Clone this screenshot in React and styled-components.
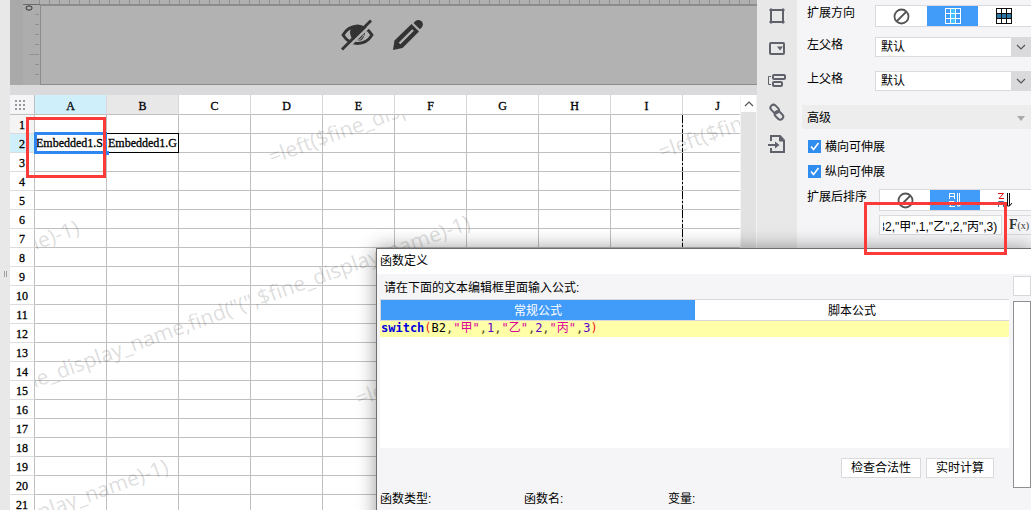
import React, { useEffect, useRef } from "react";
import styled, { createGlobalStyle, css } from "styled-components";

const Global = createGlobalStyle`
  *, *::before, *::after { box-sizing: border-box; }
  body {
    margin: 0;
    overflow: hidden;
    background: #e8e8e8;
    color: #000;
    font: 12px/16px "Liberation Sans", "Noto Sans CJK SC", sans-serif;
  }
  button, input, select { font: inherit; color: inherit; margin: 0; }
`;

const Shell = styled.div`
  position: relative;
  display: grid;
  grid-template-columns: 10px minmax(0, 1fr) 40px 234px;
  height: 100vh;
  overflow: hidden;
`;

/* ---------- designer area ---------- */

const Splitter = styled.div`
  display: flex;
  align-items: center;
  justify-content: center;
  padding-top: 38px;
  background: #e8e8e8;
  &::before {
    content: "";
    width: 3px;
    height: 6px;
    border: solid #a0a0a0;
    border-width: 0 1px;
  }
`;

const Designer = styled.main`
  display: flex;
  flex-direction: column;
  min-width: 0;
  min-height: 0;
`;

const Stage = styled.section`
  display: grid;
  grid-template-columns: 13px 17px minmax(0, 1fr);
  grid-template-rows: 4px 81px;
  background: #a9a9a9;
`;

const TopRuler = styled.div`
  grid-column: 3;
  background: repeating-linear-gradient(90deg, #919191 0 1px, #b0b0b0 1px 10px);
  margin-left: -1px;
`;

const RulerCorner = styled.div`
  grid-column: 2;
  background: #adadad;
`;

const SideRuler = styled.div`
  grid-column: 2;
  background: #adadad;
  border-top: 1px solid #6c6c6c;
`;

const Canvas = styled.div`
  display: flex;
  justify-content: center;
  gap: 18px;
  padding: 13px 34px 0 1px;
  background: #b2b2b2;
  border: solid #8c8c8c;
  border-width: 2px 0 1px 1px;
`;

const IconButton = styled.button`
  display: flex;
  padding: 0;
  height: 32px;
  border: 0;
  background: none;
  color: #333;
`;

const Gap = styled.div`
  flex: none;
  height: 10px;
  background: #dadadd;
`;

const SheetArea = styled.section`
  flex: 1;
  display: flex;
  min-height: 0;
  background: #fff;
`;

const SheetView = styled.div`
  position: relative;
  flex: 1;
  min-width: 0;
  overflow: hidden;
`;

const Sheet = styled.table`
  width: 100%;
  table-layout: fixed;
  border-collapse: separate;
  border-spacing: 0;
  font: 12px/16px "Liberation Serif", serif;
  -webkit-text-stroke: 0.3px #000;
`;

const ColHead = styled.th`
  height: 20px;
  padding: 2px 0 0;
  font-weight: 400;
  text-align: center;
  border: solid #c0c0c0;
  border-width: 0 1px 1px 0;
  border-right-color: #d8d8dc;
  background: ${(p) => (p.$state === "active" ? "#cfeffb" : p.$state === "used" ? "#e8e8e8" : "#fff")};
  &:last-child { border-right: 0; padding-left: 12px; }
`;

const Corner = styled.td`
  padding: 0 0 0 4px;
  background: #f5f5f7;
  border: solid #c0c0c0;
  border-width: 0 1px 1px 0;
  svg { display: block; }
`;

const RowHead = styled.th`
  height: 19px;
  padding: 1px 0 0;
  line-height: 16px;
  font-weight: 400;
  text-align: center;
  border: solid #c0c0c0;
  border-width: 0 1px 1px 0;
  border-bottom-color: #dcdce0;
  background: ${(p) => (p.$state === "active" ? "#cfeffb" : p.$state === "used" ? "#f4f4f4" : "#fff")};
`;

const Cell = styled.td`
  position: relative;
  height: 19px;
  padding: 0 0 0 1px;
  line-height: 16px;
  white-space: nowrap;
  border: solid #c0c0c0;
  border-width: 0 1px 1px 0;
  &:last-child { border-right: 0; }
  ${(p) => p.$pageBreak && css`
    border-right: 0;
    background: repeating-linear-gradient(180deg, #000 0 8px, #c0c0c0 8px 10px, #000 10px 12px, #c0c0c0 12px 14px, #000 14px 19px) right / 1px 100% no-repeat;
  `}
`;

const Outline = styled.span`
  position: absolute;
  inset: ${(p) => (p.$selected ? "-2px -1px" : "-1px")};
  border: ${(p) => (p.$selected ? "3px solid #2f86f0" : "1px solid #000")};
  z-index: ${(p) => (p.$selected ? 3 : 2)};
  &::after {
    content: "";
    display: ${(p) => (p.$selected ? "block" : "none")};
    position: absolute;
    right: -5px;
    bottom: -4px;
    width: 4px;
    height: 4px;
    background: #2f86f0;
  }
`;

const WatermarkLayer = styled.div`
  position: absolute;
  inset: 20px 0 0 25px;
  overflow: hidden;
  pointer-events: none;
`;

const Watermark = styled.span`
  position: absolute;
  left: ${(p) => p.$x}px;
  top: ${(p) => p.$y}px;
  font: 21px/24px "Noto Sans", sans-serif;
  white-space: nowrap;
  color: rgba(0, 0, 0, 0.14);
  transform: rotate(-20deg);
  transform-origin: 0 100%;
`;

const Scrollbar = styled.div`
  flex: none;
  width: 17px;
  display: flex;
  flex-direction: column;
  background: #e2e2e2;
  border: solid #f4f4f4;
  border-width: 0 1px;
`;

const ScrollUp = styled.button`
  display: flex;
  align-items: center;
  justify-content: center;
  height: 17px;
  padding: 0;
  border: 0;
  background: #fff;
`;

/* ---------- tool rail ---------- */

const Rail = styled.nav`
  display: flex;
  flex-direction: column;
  align-items: center;
  gap: 12px;
  padding-top: 6px;
  background: #e8e8e8;
`;

const RailButton = styled.button`
  display: flex;
  padding: 0;
  width: 20px;
  height: 20px;
  border: 0;
  background: none;
  color: #5f616b;
`;

/* ---------- property panel ---------- */

const Panel = styled.aside`
  min-width: 0;
  overflow: hidden;
  background: #f5f5f7;
  padding: 5px 0 0 5px;
`;

const Field = styled.div`
  display: grid;
  grid-template-columns: ${(p) => (p.$wide ? 77 : 73)}px minmax(0, 1fr);
  align-items: start;
  margin-bottom: ${(p) => p.$after}px;
`;

const FieldLabel = styled.label`
  padding-left: 5px;
  line-height: 16px;
`;

const Segments = styled.div`
  display: flex;
  height: 22px;
  background: #fff;
  border: 1px solid #dadadd;
  border-right: 0;
`;

const Segment = styled.button`
  flex: 0 0 ${(p) => p.$w}px;
  display: flex;
  align-items: center;
  justify-content: center;
  padding: 0;
  border: 0;
  background: ${(p) => (p.$on ? "#419bf9" : "#fff")};
`;

const SelectBox = styled.div`
  display: flex;
  height: 20px;
  background: #fff;
  border: 1px solid #dadadd;
  border-right: 0;
`;

const Select = styled.select`
  flex: 1;
  min-width: 0;
  appearance: none;
  padding: 0 5px;
  border: 0;
  background: #fff;
`;

const SelectArrow = styled.span`
  flex: none;
  width: 20px;
  display: flex;
  align-items: center;
  justify-content: center;
  background: #dadadd;
  pointer-events: none;
`;

const GroupHeader = styled.button`
  display: flex;
  width: 100%;
  height: 24px;
  align-items: center;
  justify-content: space-between;
  padding: 2px 6px 0 5px;
  border: 0;
  background: #ededed;
  text-align: left;
`;

const CheckGroup = styled.div`
  padding: 5px 0;
`;

const CheckRow = styled.label`
  display: flex;
  align-items: center;
  gap: 4px;
  height: 25px;
  padding-left: 6px;
`;

const Checkbox = styled.input`
  appearance: none;
  width: 13px;
  height: 13px;
  background: #2f8df0 url("data:image/svg+xml,%3Csvg xmlns='http://www.w3.org/2000/svg' viewBox='0 0 13 13'%3E%3Cpath d='M3 6.5l2.5 3L10.500 3' fill='none' stroke='white' stroke-width='1.600'/%3E%3C/svg%3E") center / 13px 13px;
`;

const FormulaRow = styled.div`
  display: flex;
  gap: 4px;
  padding-left: 77px;
  height: 20px;
`;

const FormulaInput = styled.input`
  width: 123px;
  height: 20px;
  padding: 0 4px 0 3px;
  border: 1px solid #dadadd;
  background: #fff;
`;

const FxButton = styled.button`
  flex: 1;
  padding: 0;
  border: 1px solid #dadadd;
  border-right: 0;
  background: #f5f5f7;
  font: 700 14px/16px "Liberation Serif", serif;
  color: #333;
  white-space: nowrap;
  small { font-size: 10px; font-weight: 400; }
`;

/* ---------- formula dialog ---------- */

const Dialog = styled.section`
  position: absolute;
  z-index: 5;
  left: 376px;
  right: -1px;
  top: 248px;
  bottom: -30px;
  display: flex;
  flex-direction: column;
  border: 1px solid #6e6e6e;
  background: #f5f5f7;
  box-shadow: 0 0 18px rgba(0, 0, 0, 0.4);
`;

const TitleBar = styled.h2`
  margin: 0;
  height: 25px;
  padding: 4px 3px;
  font-size: 12px;
  font-weight: 400;
  line-height: 16px;
  background: #fff;
`;

const DialogBody = styled.div`
  display: grid;
  grid-template-columns: minmax(0, 1fr) 18px;
  column-gap: 4px;
  padding-left: 3px;
`;

const EditorColumn = styled.div`
  display: flex;
  flex-direction: column;
`;

const Prompt = styled.p`
  margin: 0;
  height: 25px;
  padding: 6px 4px;
`;

const Tabs = styled.div`
  display: flex;
  height: 22px;
  border: 1px solid #d8d8dc;
  border-right: 0;
`;

const Tab = styled.button`
  flex: 1;
  padding: 2px 0 0;
  border: 0;
  line-height: 16px;
  background: ${(p) => (p.$on ? "#419bf9" : "#fff")};
  color: ${(p) => (p.$on ? "#fff" : "#000")};
`;

const Editor = styled.div`
  height: 127px;
  background: #fff;
  font: 12px/16px "DejaVu Sans Mono", "Noto Sans CJK SC", monospace;
  outline: none;
`;

const CodeLine = styled.div`
  height: 16px;
  line-height: 14px;
  padding-left: 1px;
  background: #ffffa8;
  white-space: pre;
`;

const tokenColors = { fn: "#0000e0", paren: "#f02020", ref: "#000", sep: "#4d4d20", str: "#dc009c", num: "#6400c8" };
const Token = styled.span`
  color: ${(p) => tokenColors[p.$kind]};
  font-weight: ${(p) => (p.$kind === "fn" ? 700 : 400)};
`;

const Actions = styled.div`
  display: flex;
  justify-content: flex-end;
  gap: 5px;
  padding: 10px 15px 0 0;
`;

const ActionButton = styled.button`
  height: 20px;
  padding: 0 9px;
  border: 1px solid #dadadd;
  background: #fff;
  line-height: 18px;
`;

const Captions = styled.div`
  display: grid;
  grid-template-columns: 144px 144px 1fr;
  padding: 3px 0 0 3px;
`;

const SideColumn = styled.div`
  display: flex;
  flex-direction: column;
  gap: 5px;
  padding-top: 2px;
`;

const SearchBox = styled.input`
  width: 100%;
  height: 20px;
  border: 1px solid #d8d8dc;
  background: #fff;
`;

const ListBox = styled.div`
  height: 187px;
  border: 1px solid #909090;
  background: #fff;
`;

const Highlight = styled.div`
  position: absolute;
  z-index: 6;
  left: ${(p) => p.$x}px;
  top: ${(p) => p.$y}px;
  width: ${(p) => p.$w}px;
  height: ${(p) => p.$h}px;
  border: 3px solid #fb3a3a;
  pointer-events: none;
`;

/* ---------- icons ---------- */

const EyeOff = () => (
  <svg width="33" height="32" viewBox="0 0 33 32" fill="none" stroke="currentColor">
    <path d="M2 16C6 9 11 7.500 16 7.500S27 9 31 16C27 22.500 21 24.500 16.500 24.500S6 22.500 2 16z" strokeWidth="2.800" />
    <path d="M9 13a7.500 7.500 0 0 1 15 0q0 5-4 8.500h-7Q9 18 9 13z" fill="currentColor" stroke="none" />
    <path d="M12 21.500q8 1 11-6" stroke="#b2b2b2" strokeWidth="1" />
    <path d="M3 32L33 3" stroke="#b2b2b2" strokeWidth="2.500" />
    <path d="M1 30.500L30 1.500" strokeWidth="2.800" />
  </svg>
);

const Pencil = () => (
  <svg width="32" height="32" viewBox="0 0 32 32" fill="currentColor">
    <path d="M1 31L2.500 21.500 19.500 5l7.500 7.500L10.500 29z" />
    <path d="M21.500 4l2-2c2-1.800 4.500-1.200 6 .3s2 4 .3 6l-2 2z" />
    <path d="M7.500 24.500L21 11" stroke="#b2b2b2" strokeWidth="2.400" />
  </svg>
);

const DotsIcon = () => (
  <svg width="12" height="10" fill="#999">
    {[0, 4, 8].map((y) => [1, 5, 9].map((x) => <rect key={`${x}-${y}`} x={x} y={y} width="2" height="2" />))}
  </svg>
);

const Chevron = ({ up }) => (
  <svg width="10" height="6" viewBox="0 0 10 6" fill="none" stroke="#555" strokeWidth="1.200">
    <path d={up ? "M1 5l4-4 4 4" : "M1 1l4 4 4-4"} />
  </svg>
);

const Ban = () => (
  <svg width="17" height="17" viewBox="0 0 17 17" fill="none" stroke="#555" strokeWidth="1.800">
    <circle cx="8.500" cy="8.500" r="7" />
    <path d="M3.500 13.500l10-10" />
  </svg>
);

const GridIcon = ({ horizontal }) => (
  <svg width="16" height="16" viewBox="0 0 16 16">
    <rect width="16" height="16" fill={horizontal ? "#111" : "#fff"} />
    {[1, 6, 11].map((y) =>
      [1, 6, 11].map((x) => (
        <rect
          key={`${x}-${y}`}
          x={x}
          y={y}
          width="4"
          height="4"
          fill={horizontal ? (y === 6 ? "#2f76a8" : "#fff") : x === 6 ? "#3fc4ff" : "#419bf9"}
        />
      ))
    )}
  </svg>
);

const SortIcon = ({ desc }) => (
  <svg width="16" height="16" viewBox="0 0 16 16" fill="none" stroke={desc ? "#111" : "#fff"}>
    {desc ? (
      <>
        <path d="M1 1.500h5.500L2 6.500H7" stroke="#e01010" />
        <path d="M1.500 15V9.500h5V15M1.500 12.500h5" stroke="#2f76a8" />
      </>
    ) : (
      <>
        <path d="M2.500 7V1.500h5V7M2.500 4.500h5" />
        <path d="M2 9.500h5L2.500 14.500H8" />
      </>
    )}
    <path d="M10.500 1v13M12.500 1v13M10.500 14h2l2.500-3" />
  </svg>
);

const railIcons = [
  ["单元格元素", <path d="M4 2.500v15M16 2.500v15M2.500 4h15M2.500 16h15" />],
  ["控件设置", <><rect x="3" y="5" width="14" height="11" rx="1" /><path d="M10 8.500h6l-3 4z" fill="currentColor" stroke="none" /></>],
  ["条件属性", <><rect x="6" y="5" width="12" height="4" rx="1" /><rect x="6" y="12" width="9" height="4" rx="1" /><path d="M4 6.500H1.500v8H4" strokeWidth="1" /></>],
  ["超级链接", <g transform="rotate(45 10 10)"><rect x="1.500" y="6.500" width="9.500" height="6" rx="3" /><rect x="9" y="8" width="9.500" height="6" rx="3" /></g>],
  ["导出", <><path d="M4 7V2h9l4 4.500V18H4v-4" /><path d="M12.500 2v5H17z" fill="currentColor" strokeWidth="1" /><path d="M1 11h9" /><path d="M8 7.500l4.500 3.500L8 14.500z" fill="currentColor" stroke="none" /></>],
];

/* ---------- data ---------- */

const columns = "ABCDEFGHIJ".split("");
const rows = Array.from({ length: 21 }, (_, i) => i + 1);
const cellText = { A2: "Embedded1.S", B2: "Embedded1.G" };
const watermarkText = '=left($fine_display_name,find("(",$fine_display_name)-1)';
const watermarks = [[238, 29], [628, 24], [-77, 281], [-468, 286], [325, 271], [-379, 525]];
const code = [
  ["fn", "switch"], ["paren", "("], ["ref", "B2"], ["sep", ","], ["str", '"甲"'], ["sep", ","], ["num", "1"],
  ["sep", ","], ["str", '"乙"'], ["sep", ","], ["num", "2"], ["sep", ","], ["str", '"丙"'], ["sep", ","],
  ["num", "3"], ["paren", ")"],
];

function Spreadsheet() {
  return (
    <SheetArea>
      <SheetView>
        <Sheet>
          <colgroup>
            <col width="25" />
            {columns.map((c) => <col key={c} width={c === "J" ? undefined : 72} />)}
          </colgroup>
          <thead>
            <tr>
              <Corner><DotsIcon /></Corner>
              {columns.map((c) => (
                <ColHead key={c} scope="col" $state={c === "A" ? "active" : c === "B" ? "used" : ""}>{c}</ColHead>
              ))}
            </tr>
          </thead>
          <tbody>
            {rows.map((r) => (
              <tr key={r}>
                <RowHead scope="row" $state={r === 2 ? "active" : r === 1 ? "used" : ""}>{r}</RowHead>
                {columns.map((c) => (
                  <Cell key={c} $pageBreak={c === "I"}>
                    {cellText[c + r]}
                    {cellText[c + r] && <Outline $selected={c === "A"} />}
                  </Cell>
                ))}
              </tr>
            ))}
          </tbody>
        </Sheet>
        <WatermarkLayer aria-hidden="true">
          {watermarks.map(([x, y]) => <Watermark key={`${x}-${y}`} $x={x} $y={y}>{watermarkText}</Watermark>)}
        </WatermarkLayer>
      </SheetView>
      <Scrollbar><ScrollUp aria-label="向上滚动"><Chevron up /></ScrollUp></Scrollbar>
    </SheetArea>
  );
}

function ParentField({ id, label, after }) {
  return (
    <Field $after={after}>
      <FieldLabel htmlFor={id}>{label}</FieldLabel>
      <SelectBox>
        <Select id={id} defaultValue="默认"><option>默认</option></Select>
        <SelectArrow><Chevron /></SelectArrow>
      </SelectBox>
    </Field>
  );
}

function Properties() {
  const formula = useRef(null);
  useEffect(() => {
    formula.current.scrollLeft = formula.current.scrollWidth;
  }, []);
  return (
    <Panel>
      <Field $after={10}>
        <FieldLabel as="span">扩展方向</FieldLabel>
        <Segments role="group" aria-label="扩展方向">
          <Segment $w={51} aria-label="不扩展"><Ban /></Segment>
          <Segment $w={51} $on aria-label="纵向"><GridIcon /></Segment>
          <Segment $w={51} aria-label="横向"><GridIcon horizontal /></Segment>
        </Segments>
      </Field>
      <ParentField id="left-parent" label="左父格" after={14} />
      <ParentField id="top-parent" label="上父格" after={14} />
      <GroupHeader>
        高级
        <svg width="8" height="5"><path d="M0 0h8L4 5z" fill="#aaa" /></svg>
      </GroupHeader>
      <CheckGroup>
        <CheckRow><Checkbox type="checkbox" defaultChecked />横向可伸展</CheckRow>
        <CheckRow><Checkbox type="checkbox" defaultChecked />纵向可伸展</CheckRow>
      </CheckGroup>
      <Field $wide $after={4}>
        <FieldLabel as="span">扩展后排序</FieldLabel>
        <Segments role="group" aria-label="扩展后排序">
          <Segment $w={50} aria-label="不排序"><Ban /></Segment>
          <Segment $w={50} $on aria-label="升序"><SortIcon /></Segment>
          <Segment $w={50} aria-label="降序"><SortIcon desc /></Segment>
        </Segments>
      </Field>
      <FormulaRow>
        <FormulaInput ref={formula} aria-label="排序公式" defaultValue={'B2,"甲",1,"乙",2,"丙",3)'} />
        <FxButton>F<small>(x)</small></FxButton>
      </FormulaRow>
    </Panel>
  );
}

function FormulaDialog() {
  return (
    <Dialog role="dialog" aria-labelledby="dialog-title">
      <TitleBar id="dialog-title">函数定义</TitleBar>
      <DialogBody>
        <EditorColumn>
          <Prompt>请在下面的文本编辑框里面输入公式:</Prompt>
          <Tabs role="tablist">
            <Tab role="tab" aria-selected="true" $on>常规公式</Tab>
            <Tab role="tab" aria-selected="false">脚本公式</Tab>
          </Tabs>
          <Editor role="textbox" aria-label="公式" contentEditable suppressContentEditableWarning spellCheck={false}>
            <CodeLine>{code.map(([kind, text], i) => <Token key={i} $kind={kind}>{text}</Token>)}</CodeLine>
          </Editor>
          <Actions>
            <ActionButton>检查合法性</ActionButton>
            <ActionButton>实时计算</ActionButton>
          </Actions>
        </EditorColumn>
        <SideColumn>
          <SearchBox aria-label="搜索函数" />
          <ListBox />
        </SideColumn>
      </DialogBody>
      <Captions>
        <span>函数类型:</span>
        <span>函数名:</span>
        <span>变量:</span>
      </Captions>
    </Dialog>
  );
}

export default function App() {
  return (
    <Shell>
      <Global />
      <Splitter />
      <Designer>
        <Stage>
          <RulerCorner />
          <TopRuler />
          <SideRuler>
            <svg width="17" height="80" fill="none">
              <rect x="3" y="1" width="6" height="4" rx="2" stroke="#333" />
              <path d="M12 9.500h4M12 19.500h4M12 29.500h4M12 39.500h4M6 49.500h10M12 59.500h4M12 69.500h4" stroke="#919191" />
            </svg>
          </SideRuler>
          <Canvas>
            <IconButton aria-label="隐藏"><EyeOff /></IconButton>
            <IconButton aria-label="编辑"><Pencil /></IconButton>
          </Canvas>
        </Stage>
        <Gap />
        <Spreadsheet />
      </Designer>
      <Rail>
        {railIcons.map(([name, shape]) => (
          <RailButton key={name} aria-label={name}>
            <svg width="20" height="20" viewBox="0 0 20 20" fill="none" stroke="currentColor" strokeWidth="2">{shape}</svg>
          </RailButton>
        ))}
      </Rail>
      <Properties />
      <FormulaDialog />
      <Highlight $x={26} $y={117} $w={80} $h={61} />
      <Highlight $x={864} $y={202} $w={143} $h={53} />
    </Shell>
  );
}
